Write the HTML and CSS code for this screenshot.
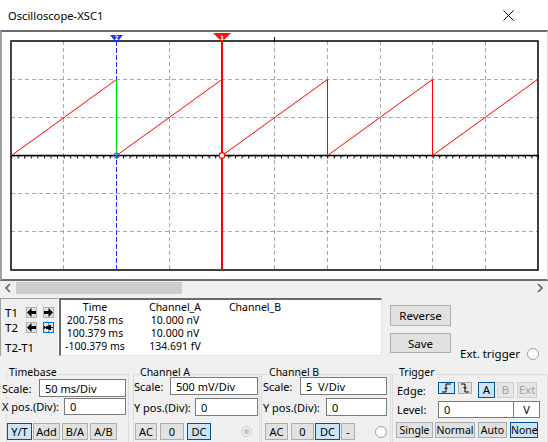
FILE: index.html
```html
<!DOCTYPE html>
<html lang="en">
<head>
    <meta charset="UTF-8">
    <title>Oscilloscope-XSC1</title>
    <link rel="stylesheet" href="styles.css">
</head>
<body>
    <div class="titlebar">
        <span class="title">Oscilloscope-XSC1</span>
        <svg class="close" width="11" height="11" viewBox="0 0 11 11"><path d="M0.5 0.5L10.5 10.5M10.5 0.5L0.5 10.5"/></svg>
    </div>

    <div class="scope">
        <svg class="plot" width="545" height="247" viewBox="2 32 545 247">
            <defs>
                <pattern id="ticks" patternUnits="userSpaceOnUse" x="11" y="155" width="6.5875" height="4">
                    <rect x="0" y="0" width="1" height="4" fill="#000"/>
                </pattern>
            </defs>
            <!-- grid -->
            <path class="grid" d="M63.5 41V270M169.5 41V270M274.5 41V270M327.5 41V270M380.5 41V270M432.5 41V270M485.5 41V270M11 79.5H538M11 117.5H538M11 156.5H538M11 193.5H538M11 231.5H538"/>
            <rect x="11" y="41" width="527" height="229" fill="none" stroke="#000" stroke-width="1.5"/>
            <path d="M274.5 37V41" stroke="#000"/>
            <!-- axis -->
            <path d="M11 155.5H538" stroke="#000" stroke-width="1.3"/>
            <rect x="11" y="155" width="528" height="3.5" fill="url(#ticks)"/>
            <!-- trace -->
            <path class="trace" d="M11.5 41V155.5L116.5 79.5M116.5 155.5L222 79.5M222 155.5L327.5 79.5M327.5 155.5L432.5 79.5M432.5 155.5L537.5 79.5M432.5 79.5V155.5"/>
            <path d="M327.5 79.5V155.5" stroke="#1f3fff"/>
            <!-- cursor 2 -->
            <path d="M116.5 41V270" stroke="#1a2cff" stroke-dasharray="5 2"/>
            <path d="M116.5 79.5V155.5" stroke="#00e000" stroke-width="1.3"/>
            <circle cx="116.5" cy="155.5" r="2.6" fill="none" stroke="#3050ff"/>
            <polygon points="110,35 123,35 118,41 115,41" fill="#1a2cff"/>
            <text class="cur-num" x="116.5" y="40">2</text>
            <!-- cursor 1 -->
            <path d="M222 41V270" stroke="#ff0000" stroke-width="2"/>
            <circle cx="222" cy="155.5" r="2.8" fill="#fff" stroke="#ff0000" stroke-width="1.2"/>
            <polygon points="213,33 231,33 223,41 221,41" fill="#ff1010"/>
            <text class="cur-num" x="222" y="39.5">1</text>
        </svg>
    </div>

    <div class="hscroll">
        <span class="sarrow"><svg width="8" height="10" viewBox="0 0 8 10"><path d="M6 1L2 5L6 9"/></svg></span>
        <span class="thumb"></span>
        <span class="sarrow right"><svg width="8" height="10" viewBox="0 0 8 10"><path d="M2 1L6 5L2 9"/></svg></span>
    </div>

    <div class="readout">
        <div class="cursors">
            <div class="cursor-row">
                <span class="lbl">T1</span>
                <button class="arrow-btn"><svg width="9" height="9" viewBox="0 0 9 9"><path d="M0 4.5L4.5 0V3H9V6H4.5V9Z"/></svg></button>
                <button class="arrow-btn"><svg width="9" height="9" viewBox="0 0 9 9"><path d="M9 4.5L4.5 0V3H0V6H4.5V9Z"/></svg></button>
            </div>
            <div class="cursor-row">
                <span class="lbl">T2</span>
                <button class="arrow-btn"><svg width="9" height="9" viewBox="0 0 9 9"><path d="M0 4.5L4.5 0V3H9V6H4.5V9Z"/></svg></button>
                <button class="arrow-btn focus"><svg width="9" height="9" viewBox="0 0 9 9"><path d="M9 4.5L4.5 0V3H0V6H4.5V9Z"/></svg></button>
            </div>
            <div class="diff">T2-T1</div>
        </div>

        <div class="table">
            <span>Time</span><span>Channel_A</span><span>Channel_B</span>
            <span>200.758 ms</span><span>10.000 nV</span><span></span>
            <span>100.379 ms</span><span>10.000 nV</span><span></span>
            <span>-100.379 ms</span><span>134.691 fV</span><span></span>
        </div>

        <div class="side">
            <button class="btn big">Reverse</button>
            <button class="btn big save">Save</button>
        </div>

        <div class="ext">
            <span>Ext. trigger</span>
            <span class="radio"></span>
        </div>
    </div>

    <div class="controls">
        <fieldset class="group timebase">
            <legend>Timebase</legend>
            <div class="field first">
                <label>Scale:</label>
                <input class="in" style="width: 87px" value="50 ms/Div" readonly>
            </div>
            <div class="field">
                <label>X pos.(Div):</label>
                <input class="in" style="width: 62px" value="0" readonly>
            </div>
            <div class="btns">
                <button class="btn on" style="width: 25px">Y/T</button>
                <button class="btn" style="width: 27px; margin-left: 1px">Add</button>
                <button class="btn" style="width: 26px; margin-left: 2px">B/A</button>
                <button class="btn" style="width: 27px; margin-left: 2px">A/B</button>
            </div>
        </fieldset>

        <fieldset class="group chan-a">
            <legend>Channel A</legend>
            <div class="field first">
                <label>Scale:</label>
                <input class="in" style="width: 88px" value="500 mV/Div" readonly>
            </div>
            <div class="field">
                <label>Y pos.(Div):</label>
                <input class="in" style="width: 63px" value="0" readonly>
            </div>
            <div class="btns">
                <button class="btn" style="width: 22px; margin-left: 1px">AC</button>
                <button class="btn" style="width: 24px; margin-left: 3px">0</button>
                <button class="btn on" style="width: 24px; margin-left: 3px">DC</button>
                <span class="radio dim" style="margin-left: 30px"></span>
            </div>
        </fieldset>

        <fieldset class="group chan-b">
            <legend>Channel B</legend>
            <div class="field first">
                <label>Scale:</label>
                <input class="in" style="width: 87px" value="5  V/Div" readonly>
            </div>
            <div class="field">
                <label>Y pos.(Div):</label>
                <input class="in" style="width: 61px" value="0" readonly>
            </div>
            <div class="btns">
                <button class="btn" style="width: 23px; margin-left: 3px">AC</button>
                <button class="btn" style="width: 23px; margin-left: 3px">0</button>
                <button class="btn on" style="width: 25px; margin-left: 1px">DC</button>
                <button class="btn" style="width: 14px; margin-left: 1px">-</button>
                <span class="radio" style="margin-left: 20px"></span>
            </div>
        </fieldset>

        <fieldset class="group trigger">
            <legend>Trigger</legend>
            <div class="trow edge-row">
                <label>Edge:</label>
                <button class="btn edge on"><svg width="11" height="10" viewBox="0 0 11 10"><path d="M1 9H5V1H10M3.5 6L5 4.5L6.5 6"/></svg></button>
                <button class="btn edge" style="width: 14px; margin-left: 3px"><svg width="10" height="10" viewBox="0 0 10 10"><path d="M1 1H5V9H9M3.5 4L5 5.5L6.5 4"/></svg></button>
                <button class="btn src on" style="margin-left: 6px">A</button>
                <button class="btn src" style="margin-left: 2px" disabled>B</button>
                <button class="btn src" style="width: 20px; margin-left: 3px" disabled>Ext</button>
            </div>
            <div class="trow level-row">
                <label>Level:</label>
                <input class="in" style="width: 76px" value="0" readonly>
                <input class="in unit" style="width: 27px" value="V" readonly>
            </div>
            <div class="trow mode-row">
                <button class="btn" style="width: 37px; margin-left: 3px">Single</button>
                <button class="btn" style="width: 40px; margin-left: 2px">Normal</button>
                <button class="btn" style="width: 29px; margin-left: 3px">Auto</button>
                <button class="btn on" style="width: 28px; margin-left: 3px">None</button>
            </div>
        </fieldset>
    </div>
</body>
</html>
```

FILE: styles.css
```css
* {
    margin: 0;
    padding: 0;
    box-sizing: border-box;
}

body {
    width: 548px;
    height: 442px;
    overflow: hidden;
    background: #f0f0f0;
    font-family: "Noto Sans", "Open Sans", sans-serif;
    font-size: 11px;
    color: #000;
}

button, input {
    font: inherit;
    color: inherit;
}

/* title bar */
.titlebar {
    height: 30px;
    background: #fff;
    display: flex;
    align-items: center;
    justify-content: space-between;
    padding: 0 34px 0 8px;
}

.title {
    font-size: 11.2px;
}

.close {
    stroke: #000;
    stroke-width: 1;
}

/* scope screen */
.scope {
    height: 251px;
    background: #fff;
    border-top: 2px solid #6d6d6d;
    border-left: 2px solid #a0a0a0;
    border-right: 1px solid #dadada;
    border-bottom: 2px solid #6d6d6d;
}

.plot {
    display: block;
}

.grid {
    stroke: #a8a8a8;
    stroke-dasharray: 4 3;
    fill: none;
}

.trace {
    stroke: #ff0000;
    fill: none;
}

.cur-num {
    font-family: "DejaVu Sans", sans-serif;
    font-size: 6px;
    font-weight: bold;
    fill: #fff;
    text-anchor: middle;
}

/* scrollbar */
.hscroll {
    height: 14px;
    display: flex;
    align-items: center;
}

.sarrow {
    width: 16px;
    display: flex;
    justify-content: center;
}

.sarrow svg {
    fill: none;
    stroke: #606060;
    stroke-width: 1.6;
}

.sarrow.right {
    margin-left: auto;
}

.thumb {
    width: 166px;
    height: 12px;
    background: #cdcdcd;
}

/* cursor readout */
.readout {
    display: flex;
    height: 58px;
    margin-top: 3px;
}

.cursors {
    width: 59px;
    border-top: 1px solid #a0a0a0;
    border-left: 1px solid #a0a0a0;
    border-right: 1px solid #fff;
    padding: 8px 0 0 4px;
}

.cursor-row {
    display: flex;
    align-items: center;
    height: 11px;
}

.cursor-row + .cursor-row {
    margin-top: 4px;
}

.cursor-row .lbl {
    width: 21px;
    font-size: 11.5px;
}

.arrow-btn {
    width: 11px;
    height: 11px;
    border: 1px solid #adadad;
    background: #e1e1e1;
    display: flex;
    align-items: center;
    justify-content: center;
}

.arrow-btn + .arrow-btn {
    margin-left: 6px;
}

.arrow-btn.focus {
    border: 1px solid #0078d7;
    outline: 1px dotted #fff;
    outline-offset: -3px;
}

.diff {
    margin-top: 8px;
    font-size: 11.5px;
    line-height: 13px;
}

.table {
    width: 323px;
    background: #fff;
    border-top: 2px solid #696969;
    border-left: 2px solid #696969;
    border-right: 1px solid #e3e3e3;
    border-bottom: 1px solid #e3e3e3;
    padding-top: 1px;
    display: grid;
    grid-template-columns: 68px 92px 68px;
    grid-auto-rows: 13px;
    align-content: start;
    line-height: 13px;
    font-size: 10.5px;
    text-align: center;
}

.side {
    margin-left: 8px;
    padding-top: 7px;
    display: flex;
    flex-direction: column;
    gap: 7px;
}

.btn {
    height: 17px;
    border: 1px solid #adadad;
    background: #e1e1e1;
    line-height: 15px;
    text-align: center;
    white-space: nowrap;
}

.btn.on {
    background: #cce4f7;
    border-color: #005499;
}

.btn:disabled {
    color: #a3a3a3;
    background: #e6e6e6;
    border-color: #cfcfcf;
}

.btn.big {
    width: 61px;
    height: 21px;
    font-size: 11.5px;
}

.btn.save {
    height: 20px;
}

.ext {
    margin: 49px 0 0 9px;
    height: 13px;
    display: flex;
    align-items: center;
    gap: 7px;
    font-size: 11.5px;
}

.radio {
    width: 12px;
    height: 12px;
    border: 1px solid #a0a0a0;
    border-radius: 50%;
    background: #fff;
    flex: none;
}

.radio.dim {
    width: 11px;
    height: 11px;
    border-color: #cccccc;
    background: radial-gradient(circle, #c8c8c8 0 2.5px, #f0f0f0 3px);
}

/* control groups */
.controls {
    display: flex;
    margin-top: 11px;
}

.group {
    border: 1px solid #dcdcdc;
    height: 77px;
    min-width: 0;
    flex: none;
}

.group legend {
    padding: 0 1px 4px;
    line-height: 10px;
    font-size: 10.5px;
}

.timebase {
    width: 123px;
    margin-left: 6px;
}

.timebase legend {
    margin-left: 1px;
}

.chan-a {
    width: 127px;
    margin-left: 4px;
}

.chan-a legend {
    margin-left: 5px;
}

.chan-b {
    width: 130px;
    margin-left: 1px;
}

.chan-b legend {
    margin-left: 6px;
}

.trigger {
    width: 156px;
    margin-left: 1px;
}

.trigger legend {
    margin-left: 5px;
}

.field {
    display: flex;
    align-items: center;
    height: 18px;
}

.field label {
    background: #f0f0f0;
    padding-right: 2px;
}

.in {
    height: 18px;
    border: 1px solid #7a7a7a;
    background: #fff;
    padding: 0 5px;
    font-size: 11px;
    outline: none;
}

.field .in {
    margin-left: auto;
}

.btns {
    display: flex;
    align-items: center;
    margin-top: 8px;
}

.timebase .field.first { margin-top: -2px; }
.timebase .field + .field { margin-top: 1px; height: 17px; }
.timebase .field + .field .in { height: 17px; }
.timebase .field label { margin-left: -5px; }
.timebase .field .in { margin-right: 2px; }

.chan-a .field.first,
.chan-b .field.first { margin-top: -4px; }
.chan-a .field + .field,
.chan-b .field + .field { margin-top: 3px; }
.chan-a .field .in { margin-right: 1px; }
.chan-b .field label { margin-left: 1px; }
.chan-b .field .in { margin-right: 3px; }
.chan-a .btns,
.chan-b .btns { margin-top: 7px; }

.trow {
    display: flex;
    align-items: center;
}

.trow label {
    width: 41px;
    margin-left: 4px;
    flex: none;
}

.edge-row {
    margin-top: 1px;
    height: 16px;
}

.btn.edge {
    width: 17px;
    height: 12px;
    align-self: flex-start;
    display: flex;
    align-items: center;
    justify-content: center;
}

.btn.edge svg {
    fill: none;
    stroke: #000;
    stroke-width: 1;
}

.btn.src {
    width: 17px;
    height: 16px;
    font-size: 11.5px;
    line-height: 14px;
}

.level-row {
    margin-top: 3px;
}

.level-row .in {
    height: 17px;
}

.in.unit {
    margin-left: -1px;
    text-align: center;
    padding: 0;
}

.mode-row {
    margin-top: 4px;
}

.mode-row .btn {
    height: 16px;
    font-size: 10.5px;
    line-height: 14px;
}
```
